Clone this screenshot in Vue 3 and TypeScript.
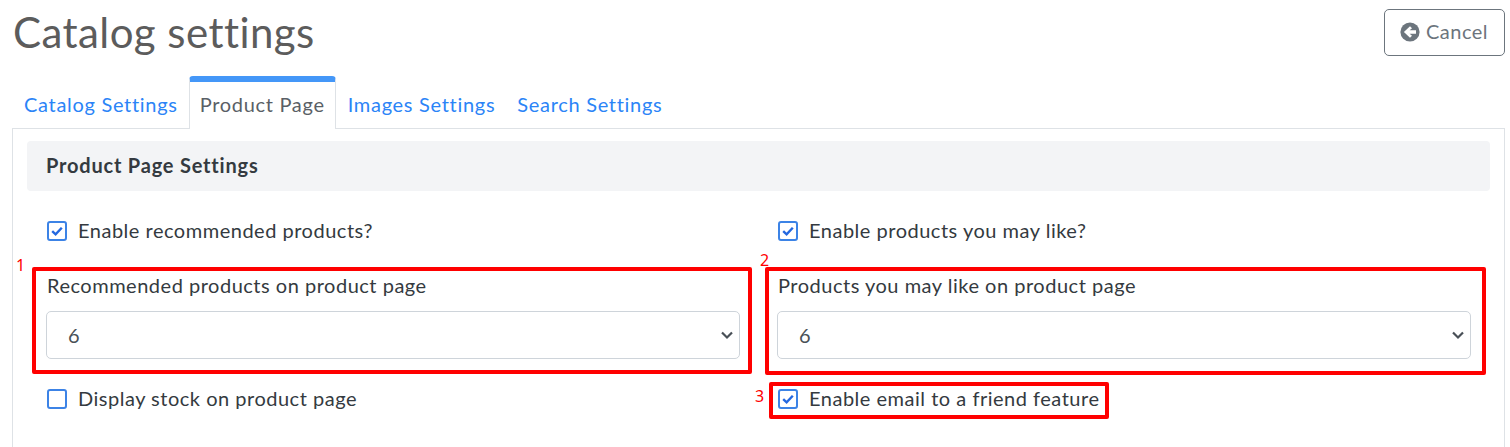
<template>
  <div class="page">
    <header class="page-head">
      <h1 class="title">Catalog settings</h1>
      <button class="cancel" type="button">
        <svg class="cancel-icon" viewBox="0 0 20 20" width="20" height="20">
          <circle cx="10" cy="10" r="9.6" fill="#6c757d" />
          <path d="M3.9 10 10 4.2 12 6.2 9.6 8.3H16V11.7H9.6L12 13.8 10 15.8Z" fill="#fff" />
        </svg>
        <span>Cancel</span>
      </button>
    </header>

    <nav class="tabs">
      <a
        v-for="tab in tabs"
        :key="tab"
        class="tab"
        :class="{ active: tab === activeTab }"
        @click="activeTab = tab"
      >{{ tab }}</a>
    </nav>

    <section class="panel">
      <div class="panel-heading">Product Page Settings</div>
      <div class="form-grid">
        <div class="cell check-cell">
          <label class="check-row">
            <span class="check" :class="{ on: recommended }">
              <svg v-if="recommended" viewBox="0 0 16 16" width="16" height="16">
                <path d="M3.2 8.2 6.6 11.4 12.8 4.8" fill="none" stroke="#2468e0" stroke-width="2.4" />
              </svg>
            </span>
            <span class="check-text">Enable recommended products?</span>
          </label>
        </div>
        <div class="cell check-cell">
          <label class="check-row">
            <span class="check" :class="{ on: mayLike }">
              <svg v-if="mayLike" viewBox="0 0 16 16" width="16" height="16">
                <path d="M3.2 8.2 6.6 11.4 12.8 4.8" fill="none" stroke="#2468e0" stroke-width="2.4" />
              </svg>
            </span>
            <span class="check-text">Enable products you may like?</span>
          </label>
        </div>

        <div class="cell select-cell">
          <div class="field-label">Recommended products on product page</div>
          <div class="select">
            <span>6</span>
            <svg viewBox="0 0 16 16" width="16" height="16">
              <path d="M3 5.5 8 10.5 13 5.5" fill="none" stroke="#495057" stroke-width="2.2" />
            </svg>
          </div>
          <span class="mark-box box-one"></span>
          <span class="mark-no no-one">1</span>
        </div>
        <div class="cell select-cell">
          <div class="field-label">Products you may like on product page</div>
          <div class="select">
            <span>6</span>
            <svg viewBox="0 0 16 16" width="16" height="16">
              <path d="M3 5.5 8 10.5 13 5.5" fill="none" stroke="#495057" stroke-width="2.2" />
            </svg>
          </div>
          <span class="mark-box box-two"></span>
          <span class="mark-no no-two">2</span>
        </div>

        <div class="cell check-cell">
          <label class="check-row">
            <span class="check"></span>
            <span class="check-text">Display stock on product page</span>
          </label>
        </div>
        <div class="cell check-cell">
          <label class="check-row">
            <span class="check on">
              <svg viewBox="0 0 16 16" width="16" height="16">
                <path d="M3.2 8.2 6.6 11.4 12.8 4.8" fill="none" stroke="#2468e0" stroke-width="2.4" />
              </svg>
            </span>
            <span class="check-text">Enable email to a friend feature</span>
          </label>
          <span class="mark-box box-three"></span>
          <span class="mark-no no-three">3</span>
        </div>
      </div>
    </section>
  </div>
</template>

<script setup lang="ts">
import { ref } from 'vue';

const tabs = ['Catalog Settings', 'Product Page', 'Images Settings', 'Search Settings'];
const activeTab = ref('Product Page');
const recommended = ref(true);
const mayLike = ref(true);
</script>

<style>
html,
body {
  margin: 0;
  background: #fff;
  overflow: hidden;
}
</style>

<style scoped>
.page {
  width: 1510px;
  height: 447px;
  box-sizing: border-box;
  padding: 9px 5px 0 12px;
  overflow: hidden;
  font-family: "Lato", "Noto Sans", sans-serif;
  color: #343a40;
}

.page-head {
  display: flex;
  justify-content: space-between;
  align-items: flex-start;
  height: 67px;
}

.title {
  margin: 0 0 0 1px;
  font-size: 42px;
  line-height: 47px;
  font-weight: 400;
  letter-spacing: 0.44px;
  color: #5c5c5c;
}

.cancel {
  display: flex;
  align-items: center;
  justify-content: center;
  gap: 6px;
  width: 121px;
  height: 47px;
  padding: 0 1px 3px 0;
  background: #fff;
  border: 1px solid #6c757d;
  border-radius: 5px;
  color: #6c757d;
  font: inherit;
  font-size: 20px;
  letter-spacing: 0.5px;
}

.cancel-icon {
  margin-top: 1px;
}

.tabs {
  display: flex;
  height: 52px;
  padding-left: 1px;
  position: relative;
  z-index: 1;
}

.tab {
  box-sizing: border-box;
  height: 52px;
  padding: 15px 11px 0;
  font-size: 20px;
  line-height: 27px;
  letter-spacing: 0.7px;
  color: #2b84f7;
  cursor: pointer;
  border-radius: 4px 4px 0 0;
}

.tab.active {
  height: 53px;
  padding: 9px 10px 0;
  margin-right: 1px;
  color: #5a5f66;
  background: #fff;
  border: 1px solid #dee2e6;
  border-top: 6px solid #4497f8;
  border-bottom: 0;
}

.panel {
  box-sizing: border-box;
  height: 330px;
  padding: 12px 14px 0;
  border: 1px solid #dee2e6;
}

.panel-heading {
  display: flex;
  align-items: center;
  height: 50px;
  padding: 0 0 2px 19px;
  box-sizing: border-box;
  background: #f3f4f6;
  border-radius: 4px;
  font-size: 20px;
  font-weight: 700;
  letter-spacing: 0.8px;
  color: #343a40;
}

.form-grid {
  display: grid;
  grid-template-columns: 694px 694px;
  column-gap: 37px;
  padding: 0 0 0 19px;
}

.cell {
  position: relative;
}

.check-cell {
  padding-top: 27px;
  height: 26px;
}

.check-row {
  display: flex;
  align-items: center;
  gap: 11px;
  height: 26px;
  padding-left: 1px;
  font-size: 20px;
  letter-spacing: 0.51px;
  white-space: nowrap;
}

.check-text {
  margin-top: -2px;
}

.check {
  box-sizing: border-box;
  display: flex;
  align-items: center;
  justify-content: center;
  width: 20px;
  height: 20px;
  border: 2px solid #3c83e6;
  border-radius: 3px;
}

.select-cell {
  padding-top: 29px;
  height: 86px;
}

.field-label {
  height: 26px;
  line-height: 24px;
  padding-left: 1px;
  font-size: 20px;
  letter-spacing: 0.51px;
  white-space: nowrap;
}

.select {
  box-sizing: border-box;
  display: flex;
  align-items: center;
  justify-content: space-between;
  height: 48px;
  margin-top: 12px;
  padding: 0 4px 0 21px;
  border: 1px solid #ced4da;
  border-radius: 5px;
  font-size: 20px;
  color: #495057;
}

.mark-box {
  position: absolute;
  box-sizing: border-box;
  border: 4px solid #ff0000;
  border-radius: 2px;
  pointer-events: none;
}

.box-one {
  left: -14px;
  top: 23px;
  width: 720px;
  height: 107px;
}

.box-two {
  left: -12px;
  top: 23px;
  width: 721px;
  height: 108px;
}

.box-three {
  left: -8px;
  top: 23px;
  width: 340px;
  height: 37px;
}

.mark-no {
  position: absolute;
  font-family: "Noto Sans", sans-serif;
  font-size: 16px;
  line-height: 20px;
  color: #ff0000;
}

.no-one {
  left: -30px;
  top: 11px;
}

.no-two {
  left: -17px;
  top: 6px;
}

.no-three {
  left: -22px;
  top: 27px;
}
</style>
